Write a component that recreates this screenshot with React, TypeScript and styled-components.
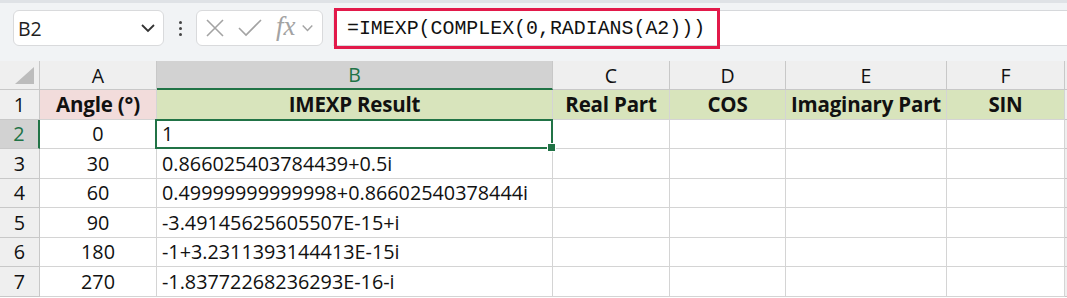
import styled, { createGlobalStyle } from 'styled-components'

const GlobalStyle = createGlobalStyle`
  body {
    margin: 0;
    background: #ffffff;
    font-family: 'Open Sans', 'Liberation Sans', sans-serif;
  }
`

const columns = [
  { key: 'A', width: 117 },
  { key: 'B', width: 396 },
  { key: 'C', width: 117 },
  { key: 'D', width: 116 },
  { key: 'E', width: 161 },
  { key: 'F', width: 118 },
]

const headers = ['Real Part', 'COS', 'Imaginary Part', 'SIN']

const rows = [
  { angle: '0', result: '1' },
  { angle: '30', result: '0.866025403784439+0.5i' },
  { angle: '60', result: '0.49999999999998+0.86602540378444i' },
  { angle: '90', result: '-3.49145625605507E-15+i' },
  { angle: '180', result: '-1+3.2311393144413E-15i' },
  { angle: '270', result: '-1.83772268236293E-16-i' },
]

export default function App() {
  return (
    <Page>
      <GlobalStyle />
      <Bar>
        <NameBox>
          <span>B2</span>
          <Chevron width="16" height="10" viewBox="0 0 16 10">
            <path d="M2 2 L8 8 L14 2" />
          </Chevron>
        </NameBox>
        <Dots>
          <i />
          <i />
          <i />
        </Dots>
        <FxBox>
          <svg width="18" height="18" viewBox="0 0 18 18">
            <path d="M1 1 L17 17 M17 1 L1 17" stroke="#a3a3a3" strokeWidth="1.6" fill="none" />
          </svg>
          <svg width="24" height="18" viewBox="0 0 24 18">
            <path d="M1 9 L8 16 L23 1" stroke="#a3a3a3" strokeWidth="1.6" fill="none" />
          </svg>
          <Fx>fx</Fx>
          <Chevron width="13" height="8" viewBox="0 0 16 10" $light>
            <path d="M2 2 L8 8 L14 2" />
          </Chevron>
        </FxBox>
        <FormulaInput>
          <Highlight>=IMEXP(COMPLEX(0,RADIANS(A2)))</Highlight>
        </FormulaInput>
      </Bar>
      <Sheet>
        <Corner>
          <svg width="20" height="18" viewBox="0 0 20 18">
            <path d="M19 0 L19 17 L0 17 Z" fill="#bcbcbc" />
          </svg>
        </Corner>
        {columns.map((c) => (
          <ColHead key={c.key} style={{ width: c.width }} $active={c.key === 'B'}>
            {c.key}
          </ColHead>
        ))}
        <Filler />

        <RowHead>1</RowHead>
        <Cell $bg="#f2dcdb" $bold $align="center">Angle (°)</Cell>
        <Cell $bg="#d8e4bc" $bold $align="center">IMEXP Result</Cell>
        {headers.map((h) => (
          <Cell key={h} $bg="#d8e4bc" $bold $align="center">
            {h}
          </Cell>
        ))}
        <Filler />

        {rows.map((r, i) => (
          <Row key={r.angle} r={r} n={i + 2} />
        ))}
      </Sheet>
    </Page>
  )
}

function Row({ r, n }: { r: { angle: string; result: string }; n: number }) {
  const active = n === 2
  return (
    <>
      <RowHead $active={active}>{n}</RowHead>
      <Cell $align="center">{r.angle}</Cell>
      <Cell $selected={active}>
        {r.result}
        {active && <Handle />}
      </Cell>
      <Cell />
      <Cell />
      <Cell />
      <Cell />
      <Filler />
    </>
  )
}

const Page = styled.div`
  width: 1067px;
  height: 298px;
  overflow: hidden;
`

const Bar = styled.div`
  height: 58px;
  display: flex;
  align-items: center;
  padding: 0 0 0 13px;
  background: #f1f3f5;
  border-top: 3px solid #dfe2e6;
  box-sizing: content-box;
`

const NameBox = styled.div`
  width: 151px;
  height: 36px;
  box-sizing: border-box;
  margin-top: -8px;
  display: flex;
  align-items: center;
  justify-content: space-between;
  padding: 0 7px 0 4px;
  background: #fff;
  border: 1px solid #d9dadc;
  border-radius: 6px;
  font-family: 'Open Sans', sans-serif;
  font-size: 19.5px;
  color: #1f1f1f;
`

const Chevron = styled.svg<{ $light?: boolean }>`
  fill: none;
  stroke: ${(p) => (p.$light ? '#a3a3a3' : '#333')};
  stroke-width: 1.8;
`

const Dots = styled.div`
  width: 32px;
  margin-top: -8px;
  display: flex;
  flex-direction: column;
  align-items: center;
  gap: 3px;
  i {
    width: 3px;
    height: 3px;
    border-radius: 50%;
    background: #444;
  }
`

const FxBox = styled.div`
  width: 127px;
  height: 36px;
  box-sizing: border-box;
  margin-top: -8px;
  display: flex;
  align-items: center;
  gap: 14px;
  padding: 0 0 0 9px;
  background: #fff;
  border: 1px solid #d9dadc;
  border-radius: 6px;
  svg:last-child {
    margin-left: -9px;
  }
`

const Fx = styled.span`
  font-family: 'Liberation Serif', serif;
  font-style: italic;
  font-size: 27px;
  color: #a3a3a3;
  line-height: 1;
  margin-top: -4px;
`

const FormulaInput = styled.div`
  flex: 1;
  height: 36px;
  box-sizing: border-box;
  margin: -8px 0 0 10px;
  display: flex;
  align-items: center;
  background: #fff;
  border-top: 1px solid #d6d8db;
  border-bottom: 1px solid #d6d8db;
  border-left: 1px solid #e2e4e6;
`

const Highlight = styled.span`
  height: 41px;
  width: 386px;
  flex-shrink: 0;
  box-sizing: border-box;
  display: flex;
  align-items: center;
  padding-left: 10px;
  border: 3px solid #e2194a;
  font-family: 'Liberation Mono', monospace;
  font-size: 19.9px;
  color: #111;
`

const Sheet = styled.div`
  display: grid;
  grid-template-columns: 40px 117px 396px 117px 116px 161px 118px 1fr;
  grid-template-rows: 29px repeat(7, 29.5px);
  font-family: 'Open Sans', sans-serif;
  font-size: 19.8px;
  color: #111;
`

const HeadBase = styled.div`
  box-sizing: border-box;
  background: #efefef;
  border-right: 1px solid #c8c8c8;
  border-bottom: 1px solid #c8c8c8;
  display: flex;
  align-items: center;
  justify-content: center;
`

const Corner = styled(HeadBase)`
  align-items: flex-end;
  justify-content: flex-end;
  padding: 0 4px 4px 0;
`

const ColHead = styled(HeadBase)<{ $active?: boolean }>`
  background: ${(p) => (p.$active ? '#d2d2d2' : '#efefef')};
  color: ${(p) => (p.$active ? '#217346' : '#111')};
  border-bottom: ${(p) => (p.$active ? '2px solid #217346' : '1px solid #c8c8c8')};
  font-size: 19.5px;
`

const RowHead = styled(HeadBase)<{ $active?: boolean }>`
  background: ${(p) => (p.$active ? '#d2d2d2' : '#efefef')};
  color: ${(p) => (p.$active ? '#217346' : '#111')};
  border-right: ${(p) => (p.$active ? '2px solid #217346' : '1px solid #c8c8c8')};
`

const Filler = styled.div`
  background: #efefef;
  border-bottom: 1px solid #c8c8c8;
`

const Cell = styled.div<{ $bg?: string; $bold?: boolean; $align?: string; $selected?: boolean }>`
  position: relative;
  box-sizing: border-box;
  display: flex;
  align-items: center;
  justify-content: ${(p) => p.$align || 'flex-start'};
  padding: 0 5px;
  white-space: nowrap;
  background: ${(p) => p.$bg || '#fff'};
  font-weight: ${(p) => (p.$bold ? 700 : 400)};
  font-size: ${(p) => (p.$bold ? '20.5px' : 'inherit')};
  letter-spacing: ${(p) => (p.$bold ? '-0.2px' : 'normal')};
  border-right: 1px solid #d4d4d4;
  border-bottom: 1px solid #d4d4d4;
  ${(p) =>
    p.$selected &&
    `
    &::after {
      content: '';
      position: absolute;
      left: -2px;
      top: -1px;
      right: -1px;
      bottom: -1px;
      border: 2px solid #217346;
      pointer-events: none;
    }
  `}
`

const Handle = styled.span`
  position: absolute;
  right: -4px;
  bottom: -4px;
  width: 7px;
  height: 7px;
  background: #217346;
  border: 1px solid #fff;
  z-index: 1;
`
